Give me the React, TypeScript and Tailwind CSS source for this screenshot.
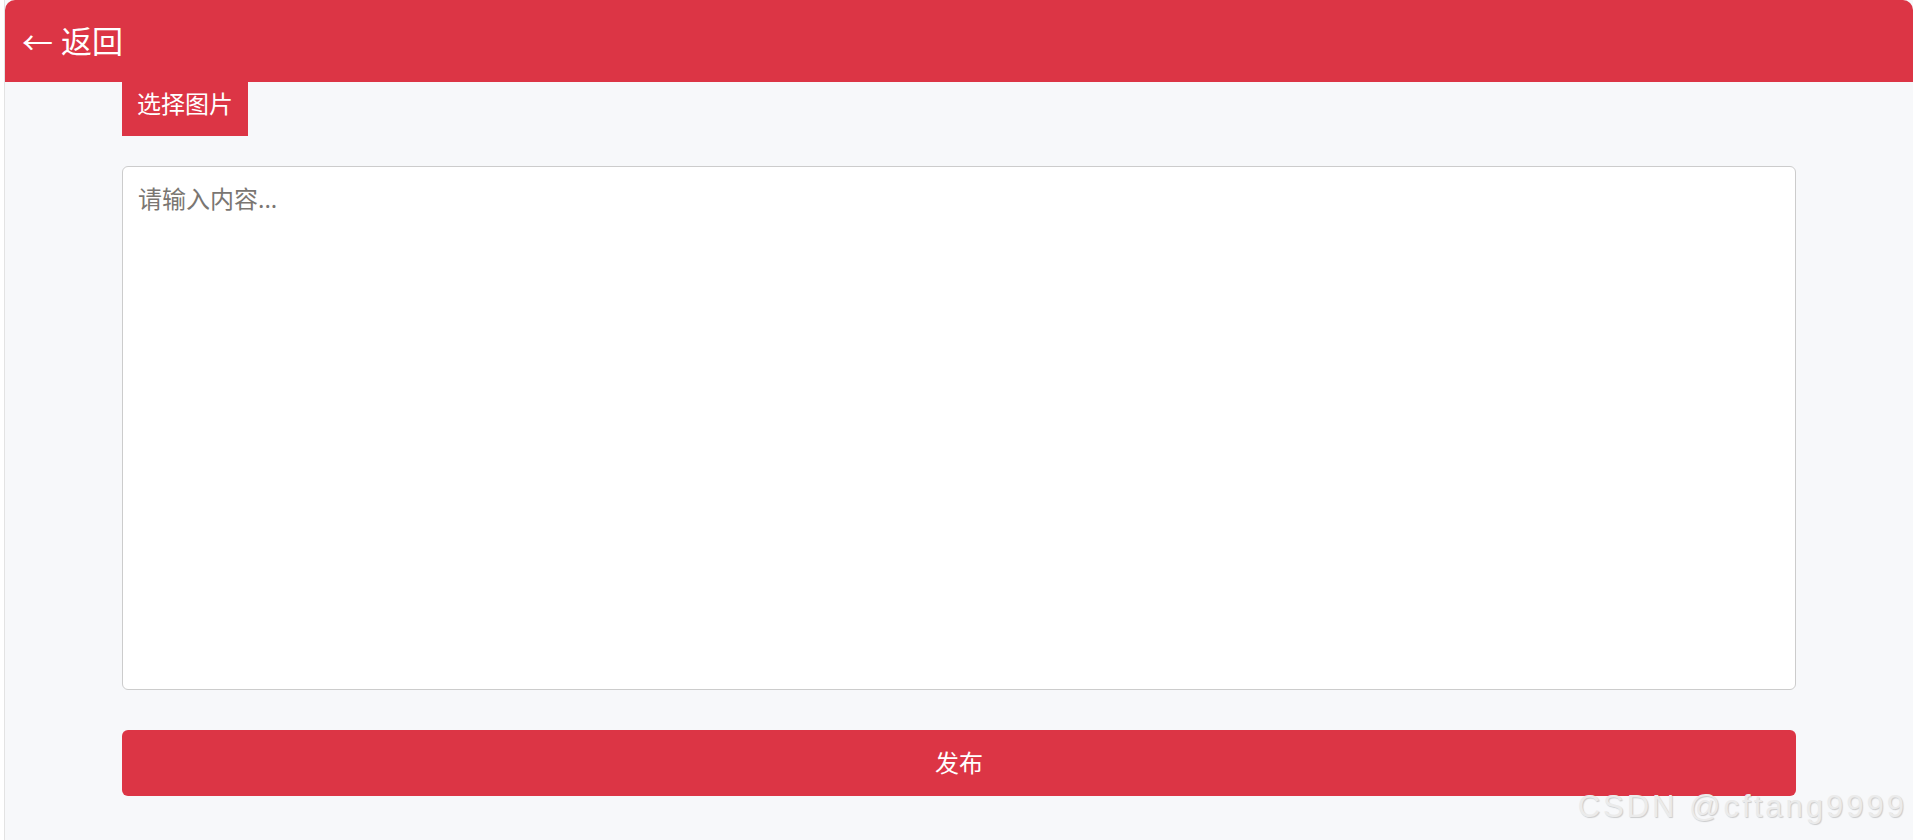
import { useState } from 'react';

export default function App() {
  const [content, setContent] = useState('');

  return (
    <div className="relative min-h-[840px] bg-white pl-1 font-['Noto_Sans','Noto_Sans_CJK_SC',sans-serif]">
      <div className="min-h-[840px] border-l border-[#e3e3e3] bg-[#f7f8fa]">
        <header className="flex h-[82px] items-center gap-[8px] rounded-t-[10px] bg-[#dc3545] px-[17px] text-[31px] text-white">
          <span className="font-['Noto_Sans_CJK_SC',sans-serif]">←</span>
          <span>返回</span>
        </header>

        <main className="mx-auto w-[1674px]">
          <button
            type="button"
            className="flex h-[54px] items-center bg-[#dc3545] px-[15px] pb-[11px] text-[24px] text-white"
          >
            选择图片
          </button>

          <textarea
            value={content}
            onChange={e => setContent(e.target.value)}
            placeholder="请输入内容..."
            className="mt-[30px] block h-[524px] w-full resize-none rounded-[6px] border border-[#cccccc] bg-white px-[15px] pt-[14px] text-[24px] leading-[36px] text-[#333] outline-none placeholder:text-[#7a7672]"
          />

          <button
            type="button"
            className="mt-[40px] flex h-[66px] w-full items-center justify-center rounded-[6px] bg-[#dc3545] text-[24px] text-white"
          >
            发布
          </button>
        </main>
      </div>

      <div className="absolute right-[6px] top-[791px] font-['Liberation_Sans',Arial,sans-serif] text-[31px] leading-none tracking-[3px] text-[#ebebeb] [text-shadow:1px_1px_1px_rgba(0,0,0,0.18)]">
        CSDN @cftang9999
      </div>
    </div>
  );
}
